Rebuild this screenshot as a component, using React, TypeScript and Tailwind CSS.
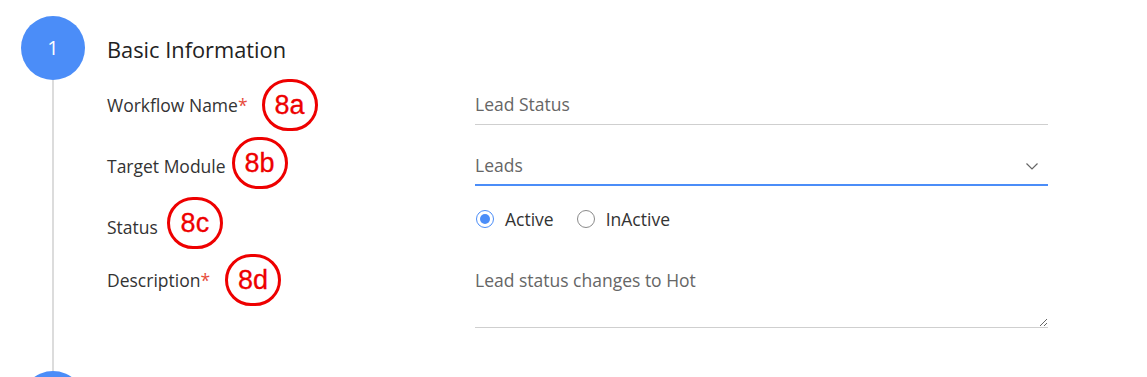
const Badge = ({ label, className }: { label: string; className?: string }) => (
  <span
    className={`inline-flex items-center justify-center w-[56px] h-[52px] rounded-full border-[3px] border-[#ee0000] text-[#ee0000] text-[27px] leading-none font-['Liberation_Sans',Arial,sans-serif] ${className ?? ""}`}
    style={{ WebkitTextStroke: "0.3px #ee0000" }}
  >
    {label}
  </span>
);

const Radio = ({ checked, label }: { checked?: boolean; label: string }) => (
  <label className="flex items-center gap-[11px]">
    <span
      className={`flex items-center justify-center w-[18px] h-[18px] rounded-full border ${
        checked ? "border-[#4b8df8]" : "border-[#8a8a8a]"
      }`}
    >
      {checked && <span className="w-[10px] h-[10px] rounded-full bg-[#4b8df8]" />}
    </span>
    <span className="text-[#333] text-[17.5px]">{label}</span>
  </label>
);

export default function App() {
  return (
    <div className="w-[1147px] h-[377px] overflow-hidden bg-white font-['Open_Sans',sans-serif]">
      <div className="flex pt-[16px] pl-[21px]">
        {/* step rail */}
        <div className="flex flex-col items-center w-[64px]">
          <div className="flex items-center justify-center w-[64px] h-[64px] rounded-full bg-[#4b8df8] text-white text-[20px]">
            1
          </div>
          <div className="w-[2px] h-[291px] bg-[#dcdcdc]" />
          <div className="w-[64px] h-[64px] rounded-full bg-[#4b8df8]" />
        </div>

        {/* form */}
        <div className="pl-[22px] pt-[20px] w-[963px]">
          <h2 className="text-[21.8px] leading-[28px] text-[#222]">Basic Information</h2>

          <div className="flex mt-[21px] h-[40px]">
            <div className="w-[368px] flex items-center text-[17.5px] text-[#333]">
              Workflow Name<span className="text-[#e74c3c]">*</span>
              <Badge label="8a" className="ml-[14px]" />
            </div>
            <div className="flex-1 flex items-center border-b border-[#cfcfcf] text-[17.5px] text-[#666]">
              Lead Status
            </div>
          </div>

          <div className="flex mt-[21px] h-[40px]">
            <div className="w-[368px] flex items-center text-[17.5px] text-[#333]">
              Target Module
              <Badge label="8b" className="ml-[6px] mt-[-6px]" />
            </div>
            <div className="flex-1 flex items-center justify-between border-b-2 border-[#4b8df8] text-[17.5px] text-[#666] pr-[10px]">
              <span>Leads</span>
              <svg width="12" height="7" viewBox="0 0 12 7" className="mt-[3px]">
                <polyline points="0.5,0.5 6,6 11.5,0.5" fill="none" stroke="#666" strokeWidth="1.2" />
              </svg>
            </div>
          </div>

          <div className="flex mt-[15px] h-[36px]">
            <div className="w-[368px] flex items-start text-[17.5px] text-[#333]">
              <span className="pt-[14px] leading-[24px]">Status</span>
              <Badge label="8c" className="ml-[9px] mt-[-4px]" />
            </div>
            <div className="flex-1 flex items-center gap-[23px] pl-[1px]">
              <Radio checked label="Active" />
              <Radio label="InActive" />
            </div>
          </div>

          <div className="flex mt-[31px]">
            <div className="w-[368px] flex items-start text-[17.5px] text-[#333]">
              <span className="leading-[24px]">
                Description<span className="text-[#e74c3c]">*</span>
              </span>
              <Badge label="8d" className="ml-[15px] mt-[-14px]" />
            </div>
            <textarea
              defaultValue="Lead status changes to Hot"
              className="flex-1 h-[60px] resize-y border-b border-[#cfcfcf] text-[17.5px] leading-[24px] text-[#666] outline-none p-0"
            />
          </div>
        </div>
      </div>
    </div>
  );
}
